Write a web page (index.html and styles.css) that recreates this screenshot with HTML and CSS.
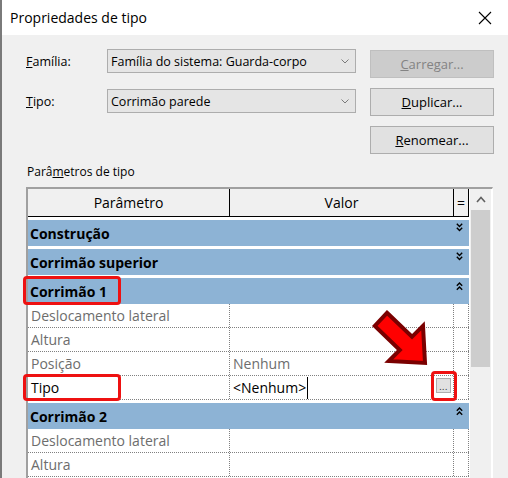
FILE: index.html
```html
<!DOCTYPE html>
<html lang="pt">
<head>
<meta charset="utf-8">
<title>Propriedades de tipo</title>
<link rel="stylesheet" href="styles.css">
</head>
<body>
<div class="page">
  <div class="window">
    <div class="titlebar">
      <span class="title">Propriedades de tipo</span>
      <svg class="close" width="14" height="14" viewBox="0 0 14 14"><path d="M1 1 L13 13 M13 1 L1 13" stroke="#000" stroke-width="1.1" fill="none"/></svg>
    </div>
    <div class="top">
      <div class="fields">
        <div class="field">
          <span class="lbl"><u>F</u>amília:</span>
          <div class="combo"><span class="ctext">Família do sistema: Guarda-corpo</span><svg class="cchev" width="8" height="5" viewBox="0 0 8 5"><path d="M0.5 0.5 L4 4 L7.5 0.5" stroke="#7a7a7a" stroke-width="1" fill="none"/></svg></div>
        </div>
        <div class="field">
          <span class="lbl"><u>T</u>ipo:</span>
          <div class="combo"><span class="ctext">Corrimão parede</span><svg class="cchev" width="8" height="5" viewBox="0 0 8 5"><path d="M0.5 0.5 L4 4 L7.5 0.5" stroke="#7a7a7a" stroke-width="1" fill="none"/></svg></div>
        </div>
      </div>
      <div class="buttons">
        <div class="btn disabled"><u>C</u>arregar...</div>
        <div class="btn"><u>D</u>uplicar...</div>
        <div class="btn"><u>R</u>enomear...</div>
      </div>
    </div>
    <div class="section-label">Parâ<u>m</u>etros de tipo</div>
    <div class="grid">
      <div class="table">
        <div class="hdr">
          <div class="c1">Parâmetro</div>
          <div class="c2">Valor</div>
          <div class="c3">=</div>
        </div>
        <div class="group"><div class="gbar"><span class="gtext">Construção</span><svg class="chev" width="7" height="9" viewBox="0 0 7 9"><path d="M0.8 0.8 L3.5 3.5 L6.2 0.8 M0.8 4.8 L3.5 7.5 L6.2 4.8" stroke="#000" stroke-width="1.4" fill="none"/></svg></div></div>
        <div class="group"><div class="gbar"><span class="gtext">Corrimão superior</span><svg class="chev" width="7" height="9" viewBox="0 0 7 9"><path d="M0.8 0.8 L3.5 3.5 L6.2 0.8 M0.8 4.8 L3.5 7.5 L6.2 4.8" stroke="#000" stroke-width="1.4" fill="none"/></svg></div></div>
        <div class="group"><div class="gbar"><span class="gtext">Corrimão 1</span><svg class="chev up" width="7" height="9" viewBox="0 0 7 9"><path d="M0.8 3.8 L3.5 1.1 L6.2 3.8 M0.8 7.8 L3.5 5.1 L6.2 7.8" stroke="#000" stroke-width="1.4" fill="none"/></svg></div></div>
        <div class="row"><div class="cell c1 ro">Deslocamento lateral</div><div class="cell c2"></div><div class="cell c3"></div></div>
        <div class="row"><div class="cell c1 ro">Altura</div><div class="cell c2"></div><div class="cell c3"></div></div>
        <div class="row"><div class="cell c1 ro">Posição</div><div class="cell c2 ro">Nenhum</div><div class="cell c3"></div></div>
        <div class="row"><div class="cell c1">Tipo</div><div class="cell c2"><span>&lt;Nenhum&gt;</span><span class="caret"></span><span class="ell">...</span></div><div class="cell c3"></div></div>
        <div class="group"><div class="gbar"><span class="gtext">Corrimão 2</span><svg class="chev up" width="7" height="9" viewBox="0 0 7 9"><path d="M0.8 3.8 L3.5 1.1 L6.2 3.8 M0.8 7.8 L3.5 5.1 L6.2 7.8" stroke="#000" stroke-width="1.4" fill="none"/></svg></div></div>
        <div class="row"><div class="cell c1 ro">Deslocamento lateral</div><div class="cell c2"></div><div class="cell c3"></div></div>
        <div class="row"><div class="cell c1 ro">Altura</div><div class="cell c2"></div><div class="cell c3"></div></div>
      </div>
      <div class="scrollbar">
        <div class="sb-up"><svg width="10" height="7" viewBox="0 0 10 7"><path d="M1 6 L5 1.5 L9 6" stroke="#606060" stroke-width="1.6" fill="none"/></svg></div>
        <div class="thumb"></div>
      </div>
    </div>
  </div>
  <div class="hl hl1"></div>
  <div class="hl hl2"></div>
  <div class="hl hl3"></div>
  <svg class="arrow" width="80" height="80" viewBox="360 300 80 80">
    <polygon points="387,312.8 412,336.8 423,325.8 425,363 388.8,361 399.8,350 374.8,326" fill="#ff0000" stroke="#7a0000" stroke-width="4" stroke-linejoin="miter"/>
  </svg>
</div>
</body>
</html>
```

FILE: styles.css
```css
body {
  margin: 0;
  background: #f0f0f0;
  font-family: "Open Sans", "Noto Sans", sans-serif;
  font-size: 14px;
  color: #000;
}

.page {
  position: relative;
  width: 508px;
  height: 478px;
  overflow: hidden;
}

.window {
  height: 100%;
  box-sizing: border-box;
  border-left: 2px solid #7a7a7a;
  background: #f0f0f0;
}

.titlebar {
  height: 35px;
  background: #fff;
  display: flex;
  align-items: center;
  padding-left: 8px;
}

.title {
  line-height: 19px;
  margin-top: -1px;
}

.close {
  margin-left: auto;
  margin-right: 16px;
  margin-top: 1px;
}

.top {
  display: flex;
}

.fields {
  margin-top: 14px;
  margin-left: 24px;
  display: flex;
  flex-direction: column;
  gap: 16px;
  font-size: 12.5px;
}

.field {
  display: flex;
  align-items: center;
  height: 24px;
}

.lbl {
  width: 81px;
}

.combo {
  width: 249px;
  height: 24px;
  box-sizing: border-box;
  border: 1px solid #adadad;
  background: #e5e5e5;
  display: flex;
  align-items: center;
  padding-left: 3px;
}

.ctext {
  flex: 1;
}

.cchev {
  margin-right: 6px;
}

.buttons {
  margin-top: 15px;
  margin-left: 14px;
  display: flex;
  flex-direction: column;
  gap: 10px;
  font-size: 13px;
}

.btn {
  width: 124px;
  height: 28px;
  box-sizing: border-box;
  border: 1px solid #adadad;
  background: #e1e1e1;
  display: flex;
  align-items: center;
  justify-content: center;
}

.btn.disabled {
  background: #cccccc;
  border-color: #bfbfbf;
  color: #838383;
}

.section-label {
  margin: 8px 0 0 25px;
  line-height: 19px;
  font-size: 12px;
}

.grid {
  margin: 6px 0 0 24px;
  width: 467px;
  height: 291px;
  box-sizing: border-box;
  border-top: 2px solid #a0a0a0;
  border-left: 2px solid #a0a0a0;
  border-right: 1px solid #fff;
  background: #fff;
  display: flex;
}

.table {
  width: 441px;
  flex: none;
}

.hdr {
  display: flex;
  height: 28px;
  box-sizing: border-box;
  border-bottom: 1px solid #000;
  background: #f0f0f0;
}

.hdr > div {
  box-sizing: border-box;
  border-right: 1px solid #000;
  display: flex;
  align-items: center;
  justify-content: center;
}

.c1 { width: 202px; }
.c2 { width: 224px; }
.c3 { width: 15px; }

.group {
  padding-top: 3px;
}

.gbar {
  height: 26px;
  background: #8db3d5;
  display: flex;
  align-items: center;
  padding-left: 2px;
  font-weight: bold;
}

.gtext {
  flex: 1;
}

.chev {
  align-self: flex-start;
  margin-top: 3px;
  margin-right: 6px;
}

.chev.up {
  margin-top: 4px;
}

.row {
  display: flex;
  height: 24px;
  box-sizing: border-box;
  border-bottom: 1px dotted #808080;
}

.cell {
  box-sizing: border-box;
  border-right: 1px dotted #808080;
  display: flex;
  align-items: center;
  padding-left: 3px;
  white-space: nowrap;
}

.ro {
  color: #6d6d6d;
}

.caret {
  width: 1px;
  height: 22px;
  background: #000;
  margin-left: 1px;
}

.ell {
  margin-left: auto;
  margin-right: 2px;
  align-self: flex-start;
  margin-top: 2px;
  width: 15px;
  height: 15px;
  box-sizing: border-box;
  border: 1px solid #adadad;
  background: #e1e1e1;
  font-size: 9px;
  line-height: 16px;
  text-align: center;
  color: #222;
  letter-spacing: 0.5px;
}

.scrollbar {
  width: 21px;
  margin-left: 1px;
  background: #f0f0f0;
  display: flex;
  flex-direction: column;
}

.sb-up {
  height: 21px;
  display: flex;
  align-items: center;
  justify-content: center;
}

.thumb {
  height: 157px;
  margin: 0 1px;
  background: #cdcdcd;
}

.hl {
  position: absolute;
  box-sizing: border-box;
  border: 3px solid #ee1111;
  border-radius: 4px;
}

.hl1 { left: 23px; top: 276px; width: 98px; height: 29px; }
.hl2 { left: 23px; top: 374px; width: 98px; height: 27px; }
.hl3 { left: 431px; top: 371px; width: 26px; height: 30px; }

.arrow {
  position: absolute;
  left: 360px;
  top: 300px;
}
```
